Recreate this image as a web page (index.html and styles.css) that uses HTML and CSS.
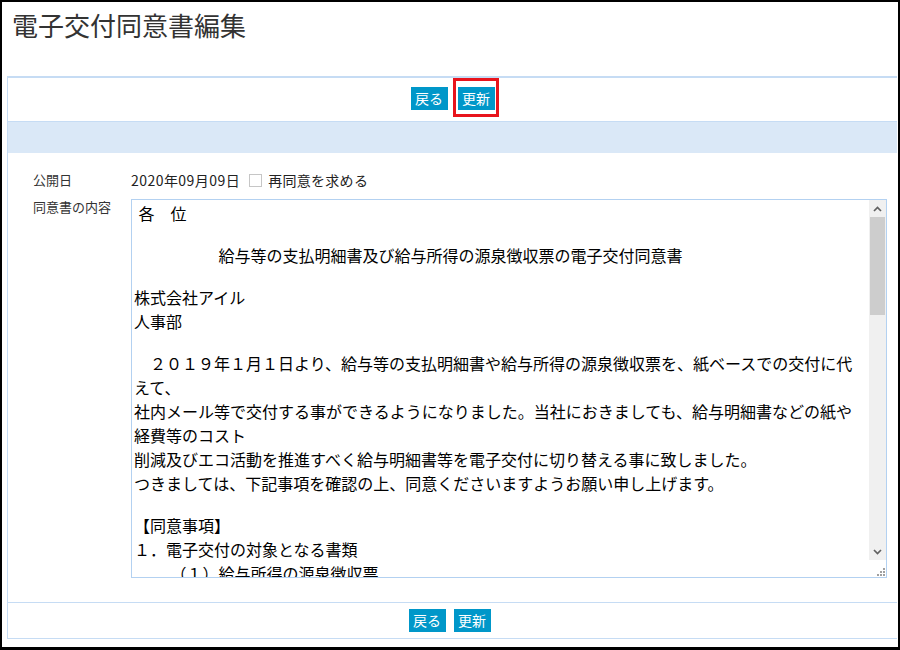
FILE: index.html
```html
<!DOCTYPE html>
<html lang="ja">
<head>
  <meta charset="UTF-8" />
  <title>電子交付同意書編集</title>
  <link rel="stylesheet" href="styles.css">
</head>
<body>
  <div class="frame">
    <h1 class="page-title">電子交付同意書編集</h1>

    <div class="panel">
      <div class="btnbar">
        <button class="btn" type="button">戻る</button>
        <button class="btn btn-mark" type="button">更新</button>
      </div>
      <div class="band"></div>

      <div class="form">
        <div class="form-label">公開日</div>
        <div class="form-value">
          <span class="date">2020年09月09日</span>
          <input class="check" type="checkbox" id="reagree">
          <label for="reagree">再同意を求める</label>
        </div>

        <div class="form-label form-label-top">同意書の内容</div>
        <div class="form-value doc-wrap">
          <textarea class="doc"> 各　位

　　　　　 給与等の支払明細書及び給与所得の源泉徴収票の電子交付同意書

株式会社アイル
人事部

　２０１９年１月１日より、給与等の支払明細書や給与所得の源泉徴収票を、紙ベースでの交付に代えて、
社内メール等で交付する事ができるようになりました。当社におきましても、給与明細書などの紙や経費等のコスト
削減及びエコ活動を推進すべく給与明細書等を電子交付に切り替える事に致しました。
つきましては、下記事項を確認の上、同意くださいますようお願い申し上げます。

【同意事項】
１．電子交付の対象となる書類
　　 （１）給与所得の源泉徴収票
　　 （２）給与等の支払明細書
　　 （３）賞与等の支払明細書
２．電子交付の方法
　　当社指定のWebシステムにて、PDFファイル形式で交付します。
　　従業員は各自のIDとパスワードでログインし、閲覧・印刷・
　　ダウンロードを行うことができます。
３．電子交付の開始時期
　　２０２０年１０月支給分より開始します。
４．書面交付の請求
　　電子交付に同意した後も、書面による交付を請求することが
　　できます。その場合は人事部までお申し出ください。
５．同意の撤回
　　本同意はいつでも撤回することができます。撤回を希望する
　　場合は、所定の届出書を人事部へ提出してください。
６．個人情報の取扱い
　　電子交付に係る個人情報は、当社の個人情報保護方針に基づき
　　適切に管理いたします。
７．その他
　　システム障害等により電子交付ができない場合は、書面にて
　　交付することがあります。

以上の内容をご確認いただき、同意いただける方は「同意する」
ボタンを押してください。

なお、ご不明な点がございましたら、下記までお問い合わせください。

【お問い合わせ先】
　株式会社アイル　人事部　給与担当
　内線：１２３４
　メール：jinji@example.co.jp

以上</textarea>
          <div class="vscroll" aria-hidden="true">
            <div class="vscroll-btn">
              <svg width="9" height="6" viewBox="0 0 9 6"><path d="M1 5l3.5-3.5L8 5" fill="none" stroke="#606060" stroke-width="1.7"/></svg>
            </div>
            <div class="vscroll-track"><div class="vscroll-thumb"></div></div>
            <div class="vscroll-btn">
              <svg width="9" height="6" viewBox="0 0 9 6"><path d="M1 1l3.5 3.5L8 1" fill="none" stroke="#606060" stroke-width="1.7"/></svg>
            </div>
          </div>
        </div>
      </div>

      <div class="btnbar btnbar-bottom">
        <button class="btn" type="button">戻る</button>
        <button class="btn" type="button">更新</button>
      </div>
    </div>
  </div>
</body>
</html>
```

FILE: styles.css
```css
/* RESET */
* { margin: 0; padding: 0; box-sizing: border-box; }
body {
  background: #fff;
  color: #333;
  font-family: "Liberation Sans", "Noto Sans CJK JP", sans-serif;
}

.frame {
  width: 900px;
  height: 650px;
  border: solid #000;
  border-width: 2px 2px 3px 2px;
  overflow: hidden;
}

.page-title {
  height: 74px;
  padding: 4px 0 0 10px;
  font-family: "Noto Sans CJK JP", sans-serif;
  font-size: 26px;
  font-weight: normal;
  color: #333;
}

/* PANEL */
.panel {
  margin: 0 1px 0 5px;
  border-left: 1px solid #c6dcf4;
  border-top: 2px solid #c6dcf4;
  border-bottom: 1px solid #c6dcf4;
}

.btnbar {
  display: flex;
  justify-content: center;
  gap: 10px;
  height: 44px;
  padding-top: 9px;
  border-bottom: 1px solid #c6dcf4;
}
.btnbar-bottom {
  height: 36px;
  padding-top: 6px;
  padding-right: 6px;
  gap: 8px;
  border-top: 1px solid #c6dcf4;
  border-bottom: 0;
}

.btn {
  width: 37px;
  height: 23px;
  border: 0;
  background: #0097c9;
  color: #fff;
  font-family: "Noto Sans CJK JP", sans-serif;
  font-size: 14px;
  line-height: 23px;
  cursor: pointer;
}
.btn-mark { position: relative; }
.btn-mark::after {
  content: "";
  position: absolute;
  left: -5px;
  right: -4px;
  top: -9px;
  bottom: -7px;
  border: 3px solid #e8141c;
}

.band {
  height: 31px;
  background: #dae8f7;
}

/* FORM */
.form {
  display: grid;
  grid-template-columns: 98px 1fr;
  row-gap: 9px;
  height: 449px;
  padding: 17px 10px 0 25px;
  align-content: start;
}
.form-label {
  font-family: "Noto Sans CJK JP", sans-serif;
  font-size: 13px;
  line-height: 20px;
  color: #333;
}
.form-label-top { line-height: 16px; }
.form-value {
  display: flex;
  align-items: center;
  font-family: "Noto Sans CJK JP", sans-serif;
  font-size: 14px;
  line-height: 20px;
  color: #222;
}
.date { letter-spacing: 0.45px; }
.form-value label { letter-spacing: 0.3px; }

.check {
  appearance: none;
  width: 13px;
  height: 13px;
  margin: 0 6px 0 9px;
  border: 1px solid #c6c6c6;
  background: #fff;
}

.doc-wrap {
  position: relative;
  display: block;
}
.doc {
  display: block;
  width: 100%;
  height: 379px;
  padding: 1px 19px 1px 2px;
  border: 1px solid #b3d1f1;
  color: #000;
  font-family: "Liberation Sans", "Noto Sans CJK JP", sans-serif;
  font-size: 16px;
  resize: vertical;
  outline: none;
}
.doc::-webkit-resizer {
  background: #fff url("data:image/svg+xml,%3Csvg xmlns='http://www.w3.org/2000/svg' width='17' height='17'%3E%3Cg fill='%23a0a0a0'%3E%3Crect x='12' y='6' width='2' height='2'/%3E%3Crect x='9' y='9' width='2' height='2'/%3E%3Crect x='12' y='9' width='2' height='2'/%3E%3Crect x='6' y='12' width='2' height='2'/%3E%3Crect x='9' y='12' width='2' height='2'/%3E%3Crect x='12' y='12' width='2' height='2'/%3E%3C/g%3E%3C/svg%3E") no-repeat;
}

/* classic scrollbar drawn over the textarea edge */
.vscroll {
  position: absolute;
  top: 1px;
  right: 1px;
  bottom: 18px;
  width: 17px;
  display: flex;
  flex-direction: column;
  background: #f0f0f0;
  pointer-events: none;
}
.vscroll-btn {
  height: 17px;
  display: flex;
  align-items: center;
  justify-content: center;
}
.vscroll-track {
  flex: 1;
  padding: 0 1px;
}
.vscroll-thumb {
  height: 98px;
  background: #cdcdcd;
}
```
